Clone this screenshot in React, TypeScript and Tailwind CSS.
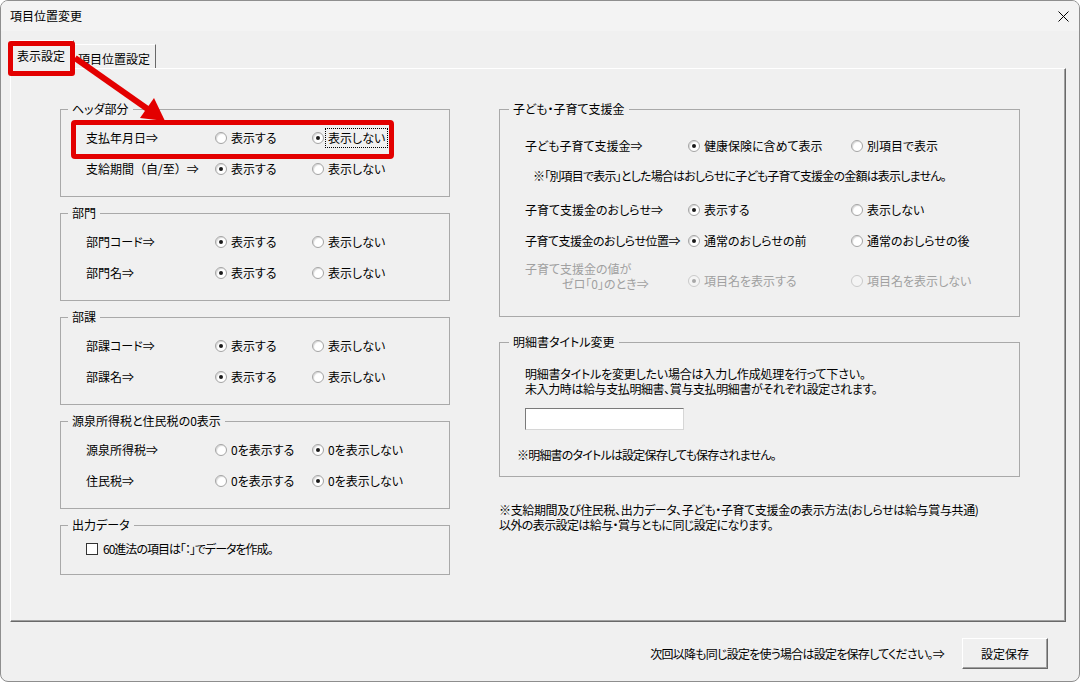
import React from 'react';

type RadioProps = { checked?: boolean; disabled?: boolean };

function Radio({ checked = false, disabled = false }: RadioProps) {
  return (
    <span
      className={
        disabled
          ? 'inline-flex shrink-0 items-center justify-center w-[12px] h-[12px] rounded-full border border-[#cacaca] bg-[#f4f4f4]'
          : 'inline-flex shrink-0 items-center justify-center w-[12px] h-[12px] rounded-full border border-[#a4a4a4] bg-white shadow-[inset_1px_1px_1px_#d8d8d8]'
      }
    >
      {checked && (
        <span
          className={
            disabled
              ? 'w-[4px] h-[4px] rounded-full bg-[#a8a8a8]'
              : 'w-[4px] h-[4px] rounded-full bg-[#1a1a1a]'
          }
        />
      )}
    </span>
  );
}

type OptProps = { checked?: boolean; disabled?: boolean; label: string; focus?: boolean };

function Opt({ checked = false, disabled = false, label, focus = false }: OptProps) {
  return (
    <div className="flex items-center gap-[4px] h-[20px] whitespace-nowrap">
      <Radio checked={checked} disabled={disabled} />
      {focus ? (
        <span className="inline-block leading-[14px] outline-1 outline-dotted outline-black outline-offset-[2px]">
          {label}
        </span>
      ) : (
        <span className={disabled ? 'leading-[16px] text-[#a0a0a0]' : 'leading-[16px]'}>{label}</span>
      )}
    </div>
  );
}

type GroupProps = { title: string; right?: boolean; className: string; children: React.ReactNode };

function Group({ title, right = false, className, children }: GroupProps) {
  return (
    <div className={`relative border border-[#a9a9a9] ${className}`}>
      <span
        className={
          right
            ? 'absolute -top-[9px] left-[9px] px-[4px] leading-[16px] bg-[#f0f0f0] whitespace-nowrap'
            : 'absolute -top-[9px] left-[7px] px-[4px] leading-[16px] bg-[#f0f0f0] whitespace-nowrap'
        }
      >
        {title}
      </span>
      {children}
    </div>
  );
}

function LRow({
  label,
  a,
  b,
  aChecked,
  focusB,
  plainFont,
}: {
  label: string;
  a: string;
  b: string;
  aChecked: boolean;
  focusB?: boolean;
  plainFont?: boolean;
}) {
  return (
    <div className="grid grid-cols-[129px_97px_1fr] items-center h-[20px]">
      <span className={plainFont ? 'leading-[16px] whitespace-nowrap [font-feature-settings:normal]' : 'leading-[16px] whitespace-nowrap'}>
        {label}
      </span>
      <Opt checked={aChecked} label={a} />
      <Opt checked={!aChecked} label={b} focus={focusB} />
    </div>
  );
}

function RRow({ label, a, b, tight }: { label: string; a: string; b: string; tight?: boolean }) {
  return (
    <div className="grid grid-cols-[163px_163px_1fr] items-center h-[20px]">
      <span className={tight ? 'leading-[16px] whitespace-nowrap tracking-[-0.5px]' : 'leading-[16px] whitespace-nowrap'}>
        {label}
      </span>
      <Opt checked label={a} />
      <Opt label={b} />
    </div>
  );
}

export default function App() {
  return (
    <div className="relative w-[1080px] h-[682px] bg-[#f0f0f0] border border-[#8e8e8e] rounded-[8px] overflow-hidden flex flex-col text-[12px] text-black font-['Noto_Sans_CJK_JP','Noto_Sans',sans-serif] [font-feature-settings:'palt']">
      {/* title bar */}
      <div className="h-[30px] shrink-0 flex items-center justify-between pl-[9px] pr-[10px] bg-[#f3f3f3]">
        <span className="leading-[16px]">項目位置変更</span>
        <svg width="11" height="11" viewBox="0 0 11 11">
          <path d="M0.5 0.5L10.5 10.5M10.5 0.5L0.5 10.5" stroke="#000" strokeWidth="1" />
        </svg>
      </div>

      {/* tab strip */}
      <div className="h-[37px] shrink-0 flex items-end pl-[9px]">
        <div className="relative z-10 -mb-px w-[64px] h-[29px] bg-[#f0f0f0] border-t border-l border-r border-t-white border-l-white border-r-[#696969] pl-[6px] pt-[7px] leading-[16px] whitespace-nowrap">
          表示設定
        </div>
        <div className="w-[82px] h-[24px] border-t border-r border-t-white border-r-[#696969] pl-[4px] pt-[6px] leading-[16px] whitespace-nowrap">
          項目位置設定
        </div>
      </div>

      {/* tab page */}
      <div className="ml-[9px] w-[1056px] h-[554px] shrink-0 border-t border-l border-r border-b border-t-white border-l-white border-r-[#696969] border-b-[#696969] shadow-[inset_-1px_-1px_0_#a0a0a0] pt-[40px] pl-[49px] flex gap-[49px]">
        {/* left column */}
        <div className="w-[390px] flex flex-col gap-[16px]">
          <Group title="ヘッダ部分" className="h-[88px] pt-[18px] pl-[25px] flex flex-col gap-[11px]">
            <LRow label="支払年月日⇒" a="表示する" b="表示しない" aChecked={false} focusB />
            <LRow label="支給期間（自/至）⇒" a="表示する" b="表示しない" aChecked plainFont />
          </Group>
          <Group title="部門" className="h-[88px] pt-[18px] pl-[25px] flex flex-col gap-[11px]">
            <LRow label="部門コード⇒" a="表示する" b="表示しない" aChecked />
            <LRow label="部門名⇒" a="表示する" b="表示しない" aChecked />
          </Group>
          <Group title="部課" className="h-[88px] pt-[18px] pl-[25px] flex flex-col gap-[11px]">
            <LRow label="部課コード⇒" a="表示する" b="表示しない" aChecked />
            <LRow label="部課名⇒" a="表示する" b="表示しない" aChecked />
          </Group>
          <Group title="源泉所得税と住民税の0表示" className="h-[88px] pt-[18px] pl-[25px] flex flex-col gap-[11px]">
            <LRow label="源泉所得税⇒" a="0を表示する" b="0を表示しない" aChecked={false} />
            <LRow label="住民税⇒" a="0を表示する" b="0を表示しない" aChecked={false} />
          </Group>
          <Group title="出力データ" className="h-[50px] pt-[15px] pl-[25px]">
            <div className="flex items-center gap-[5px] h-[16px]">
              <span className="w-[12px] h-[12px] border border-[#333333] bg-white shrink-0" />
              <span className="leading-[16px] whitespace-nowrap tracking-[-1px]">60進法の項目は「：」でデータを作成。</span>
            </div>
          </Group>
        </div>

        {/* right column */}
        <div className="w-[521px] flex flex-col">
          <Group title="子ども・子育て支援金" right className="h-[208px] pt-[26px] pl-[25px] flex flex-col">
            <RRow label="子ども子育て支援金⇒" a="健康保険に含めて表示" b="別項目で表示" />
            <div className="mt-[12px] pl-[8px] leading-[16px] whitespace-nowrap tracking-[-0.8px]">
              ※「別項目で表示」とした場合はおしらせに子ども子育て支援金の金額は表示しません。
            </div>
            <div className="mt-[16px]">
              <RRow label="子育て支援金のおしらせ⇒" a="表示する" b="表示しない" />
            </div>
            <div className="mt-[11px]">
              <RRow label="子育て支援金のおしらせ位置⇒" a="通常のおしらせの前" b="通常のおしらせの後" tight />
            </div>
            <div className="mt-[10px] grid grid-cols-[163px_163px_1fr] items-end">
              <div className="flex flex-col text-[#a0a0a0] leading-[15px] whitespace-nowrap">
                <span>子育て支援金の値が</span>
                <span className="pl-[37px]">ゼロ「0」のとき⇒</span>
              </div>
              <Opt checked disabled label="項目名を表示する" />
              <Opt disabled label="項目名を表示しない" />
            </div>
          </Group>

          <Group title="明細書タイトル変更" right className="mt-[25px] h-[135px] pt-[23px] pl-[25px] flex flex-col">
            <span className="leading-[15px] whitespace-nowrap tracking-[-0.2px]">明細書タイトルを変更したい場合は入力し作成処理を行って下さい。</span>
            <span className="leading-[15px] whitespace-nowrap tracking-[-0.4px]">未入力時は給与支払明細書、賞与支払明細書がそれぞれ設定されます。</span>
            <div className="mt-[12px] w-[159px] h-[22px] bg-white border border-t-[#7a7a7a] border-l-[#7a7a7a] border-r-[#d6d6d6] border-b-[#d6d6d6]" />
            <span className="mt-[17px] -ml-[8px] leading-[16px] whitespace-nowrap tracking-[-0.8px]">※明細書のタイトルは設定保存しても保存されません。</span>
          </Group>

          <div className="mt-[25px] flex flex-col leading-[15px] whitespace-nowrap">
            <span className="tracking-[-0.35px]">※支給期間及び住民税、出力データ、子ども・子育て支援金の表示方法(おしらせは給与賞与共通)</span>
            <span className="tracking-[-0.6px]">以外の表示設定は給与・賞与ともに同じ設定になります。</span>
          </div>
        </div>
      </div>

      {/* bottom bar */}
      <div className="flex-1 flex items-start justify-end pt-[16px] pr-[31px]">
        <div className="flex items-center gap-[18px] h-[31px]">
          <span className="leading-[16px] whitespace-nowrap tracking-[-0.75px]">次回以降も同じ設定を使う場合は設定を保存してください。⇒</span>
          <button className="w-[86px] h-[31px] bg-[#f0f0f0] border border-t-white border-l-white border-r-[#696969] border-b-[#696969] shadow-[inset_-1px_-1px_0_#a0a0a0] text-[12px] leading-[16px]">
            設定保存
          </button>
        </div>
      </div>

      {/* annotations */}
      <div className="absolute left-[7px] top-[40px] w-[67px] h-[35px] border-[5px] border-[#e30000] rounded-[3px] z-20 pointer-events-none" />
      <div className="absolute left-[70px] top-[119px] w-[323px] h-[39px] border-[5px] border-[#e30000] rounded-[4px] z-20 pointer-events-none" />
      <svg className="absolute left-0 top-0 z-20 pointer-events-none" width="1080" height="682" viewBox="0 0 1080 682">
        <line x1="74" y1="57" x2="148" y2="109" stroke="#e30000" strokeWidth="6" />
        <polygon points="164,120 139,117 153,97" fill="#e30000" />
      </svg>
    </div>
  );
}
